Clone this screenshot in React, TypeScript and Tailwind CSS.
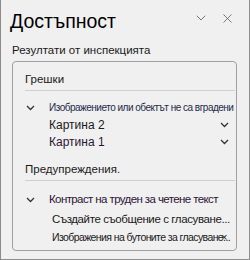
import { ChevronDown, X } from 'lucide-react';

function Chev({ className = '' }: { className?: string }) {
  return (
    <svg width="9" height="6" viewBox="0 0 9 6" className={`shrink-0 ${className}`}>
      <path d="M1 1l3.5 3.5L8 1" fill="none" stroke="#333" strokeWidth="1.3" />
    </svg>
  );
}

export default function App() {
  return (
    <div
      className="w-[250px] h-[260px] bg-[#f0f0f0] border border-[#8c8c8c] border-t-0 text-[#1a1a1a] overflow-hidden"
      style={{ fontFamily: '"Liberation Sans", Arial, sans-serif' }}
    >
      {/* Header */}
      <div className="flex items-center h-[42px] pl-[9px] pr-[14px]">
        <div className="text-[19.5px] leading-none flex-1 text-black mt-[2px]">Достъпност</div>
        <ChevronDown className="w-[16px] h-[16px] text-[#555] mr-[11px] -mt-[6px]" strokeWidth={1.2} />
        <X className="w-[15px] h-[15px] text-[#555] -mt-[6px]" strokeWidth={1.2} />
      </div>

      <div className="pl-[11px] text-[11.5px] leading-[16px]">Резултати от инспекцията</div>

      {/* Group box */}
      <div className="ml-[11px] mr-[12px] mt-[3px] h-[190px] border border-[#a0a0a0] rounded-[4px] pl-[12px] pr-[1px]">
        <div className="text-[11.5px] leading-[16px] pt-[9px] pb-[3px] border-b border-[#cfcfcf]">Грешки</div>

        <div className="flex items-center mt-[11px] h-[12px]">
          <Chev className="ml-[1px]" />
          <span className="ml-[14px] text-[10px] leading-none text-[#1f2a4a] tracking-[-0.5px] whitespace-nowrap">
            Изображението или обектът не са вградени
          </span>
        </div>
        <div className="flex items-center h-[17px] mt-[2px] pl-[24px] pr-[6px]">
          <span className="flex-1 text-[12px] leading-none">Картина 2</span>
          <Chev />
        </div>
        <div className="flex items-center h-[17px] pl-[24px] pr-[6px]">
          <span className="flex-1 text-[12px] leading-none text-[#2a1433]">Картина 1</span>
          <Chev />
        </div>

        <div className="text-[11.5px] leading-[16px] mt-[11px] pb-[3px] border-b border-[#cfcfcf]">Предупреждения.</div>

        <div className="flex items-center mt-[12px] h-[14px]">
          <Chev className="ml-[1px]" />
          <span className="ml-[14px] text-[11.5px] leading-none text-[#2a1433] tracking-[-0.6px] whitespace-nowrap">
            Контраст на труден за четене текст
          </span>
        </div>
        <div className="pl-[27px] mt-[5px] text-[11.5px] leading-[14px] tracking-[-0.4px] whitespace-nowrap">
          Създайте съобщение с гласуване...
        </div>
        <div className="relative pl-[27px] mt-[5px] text-[10.5px] leading-[13px] tracking-[-0.6px] whitespace-nowrap">
          Изображения на бутоните за гласуване...
          <span className="absolute left-[196px] top-0 text-[11px]">×</span>
        </div>
      </div>
    </div>
  );
}
